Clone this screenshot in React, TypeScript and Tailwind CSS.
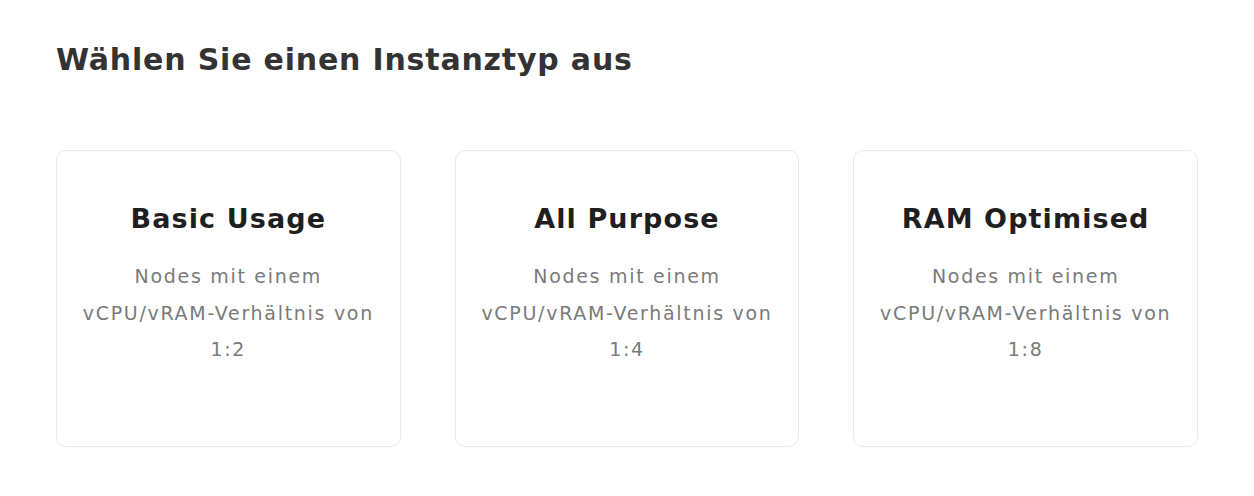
const instanceTypes = [
  { name: "Basic Usage", ratio: "1:2" },
  { name: "All Purpose", ratio: "1:4" },
  { name: "RAM Optimised", ratio: "1:8" },
];

export default function App() {
  return (
    <div className="w-full min-h-screen bg-white px-14 pt-[36px] font-['DejaVu_Sans',sans-serif]">
      <h1 className="text-[30px] leading-[48px] font-bold text-[#333333] tracking-[0.8px]">
        Wählen Sie einen Instanztyp aus
      </h1>

      <div className="mt-[66px] grid grid-cols-3 gap-[54px]">
        {instanceTypes.map((type) => (
          <div
            key={type.name}
            className="h-[297px] rounded-[10px] border border-[#e8eaec] bg-white flex flex-col items-center pt-[46px] px-4 text-center"
          >
            <h3 className="text-[27px] leading-[44px] font-bold text-[#1f1f1f] tracking-[1.1px]">
              {type.name}
            </h3>
            <p className="mt-[17px] text-[19px] leading-[36.5px] text-[#7a7a7a] tracking-[1.7px] whitespace-nowrap">
              Nodes mit einem
              <br />
              vCPU/vRAM-Verhältnis von
              <br />
              {type.ratio}
            </p>
          </div>
        ))}
      </div>
    </div>
  );
}
